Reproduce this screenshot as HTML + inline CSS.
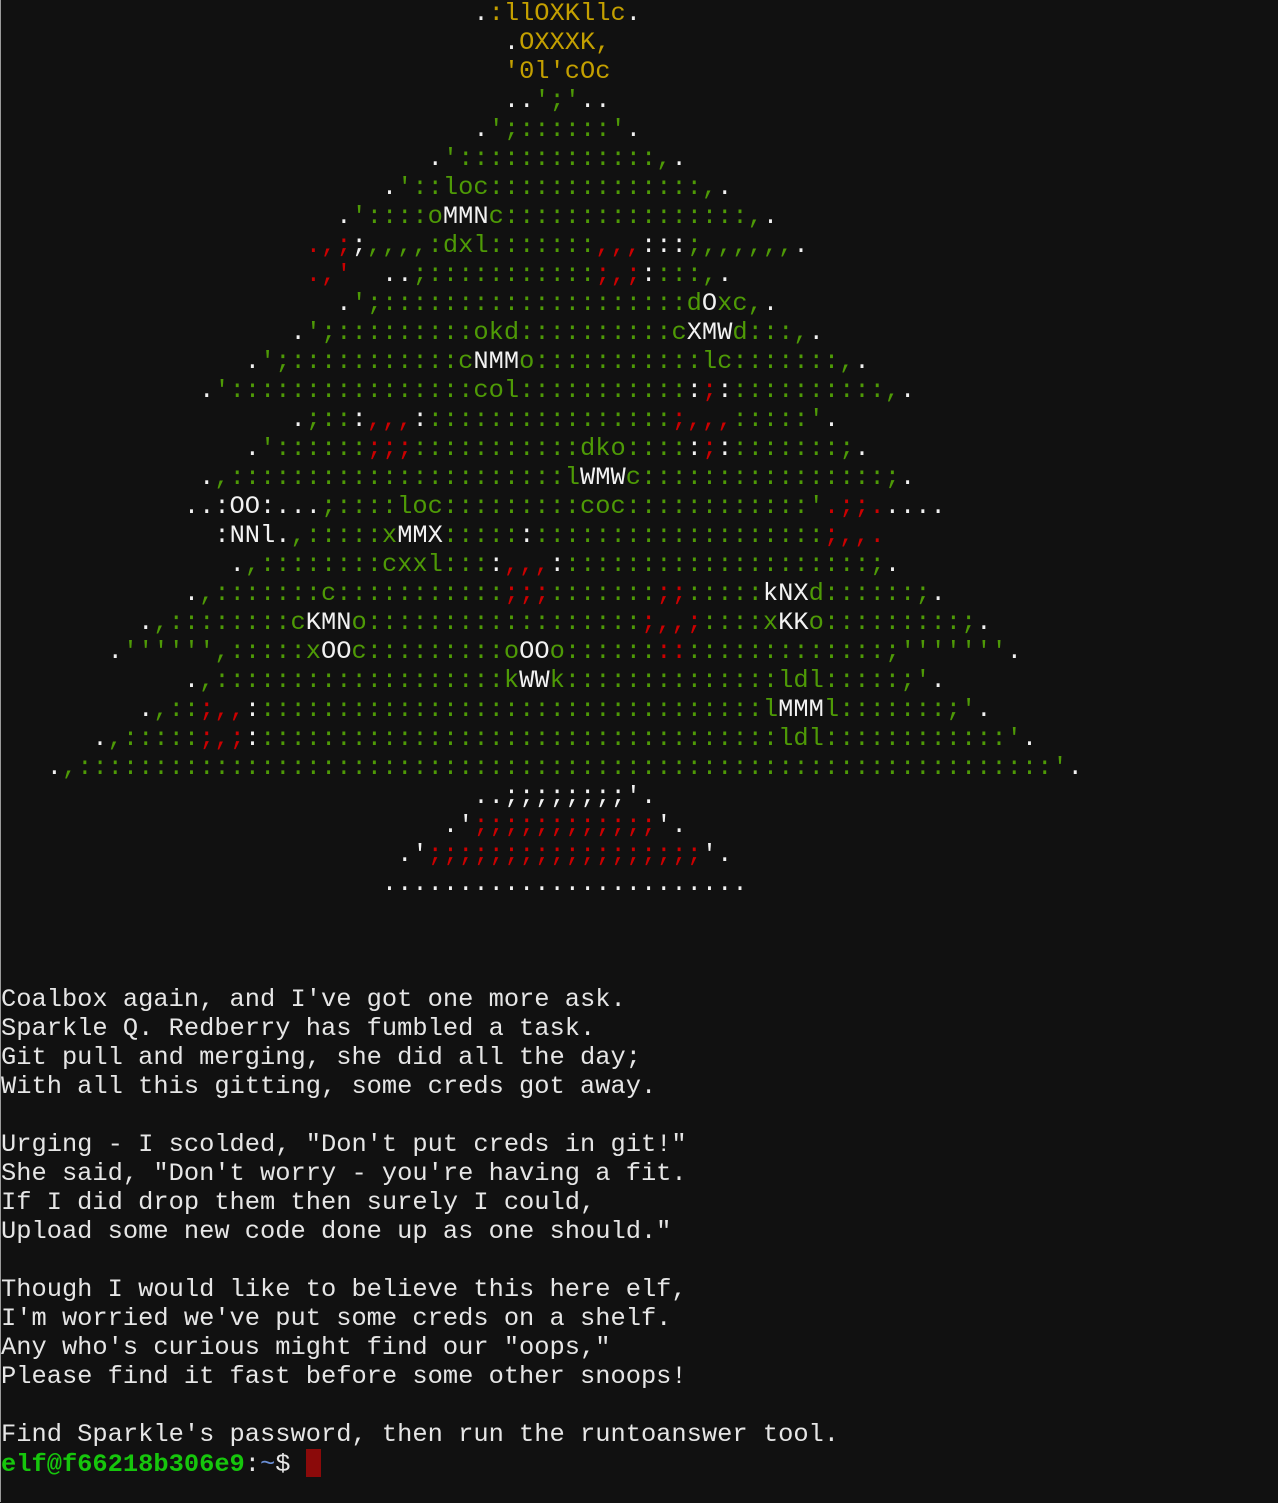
<!DOCTYPE html>
<html><head><meta charset="utf-8"><style>
html,body{margin:0;padding:0;background:#111111;}
body{width:1277px;height:1503px;overflow:hidden;border-left:1px solid #9a9a9a;}
pre{margin:-1px 0 0 0;padding:0;font-family:"Liberation Mono","DejaVu Sans Mono",monospace;font-size:25.4px;line-height:29px;color:#e6e6e6;white-space:pre;}
.w{color:#f2f2f2}.g{color:#4e9a06}.y{color:#c4a000}.r{color:#cc0000}
.p{color:#16c60c;font-weight:bold}.b{color:#6b8fd6}
.cur{display:inline-block;width:15px;height:28px;background:#8b0a0a;vertical-align:-6px;}
</style></head><body><pre>                               <span class="w">.</span><span class="y">:llOXKllc</span><span class="w">.</span>
                                 <span class="w">.</span><span class="y">OXXXK,</span>
                                 <span class="y">'0l'cOc</span>
                                 <span class="w">..</span><span class="g">';'</span><span class="w">..</span>
                               <span class="w">.</span><span class="g">';::::::'</span><span class="w">.</span>
                            <span class="w">.</span><span class="g">':::::::::::::,</span><span class="w">.</span>
                         <span class="w">.</span><span class="g">'::loc::::::::::::::,</span><span class="w">.</span>
                      <span class="w">.</span><span class="g">'::::o</span><span class="w">MMN</span><span class="g">c::::::::::::::::,</span><span class="w">.</span>
                    <span class="r">.,;</span><span class="w">;</span><span class="g">,,,,:dxl:::::::</span><span class="r">,,,</span><span class="w">:::</span><span class="g">;,,,,,,</span><span class="w">.</span>
                    <span class="r">.,'</span>  <span class="w">..</span><span class="g">;:::::::::::</span><span class="r">;,;</span><span class="w">:</span><span class="g">:::,</span><span class="w">.</span>
                      <span class="w">.</span><span class="g">';::::::::::::::::::::d</span><span class="w">O</span><span class="g">xc,</span><span class="w">.</span>
                   <span class="w">.</span><span class="g">';:::::::::okd::::::::::c</span><span class="w">XMW</span><span class="g">d:::,</span><span class="w">.</span>
                <span class="w">.</span><span class="g">';:::::::::::c</span><span class="w">NMM</span><span class="g">o:::::::::::lc:::::::,</span><span class="w">.</span>
             <span class="w">.</span><span class="g">'::::::::::::::::col:::::::::::</span><span class="w">:</span><span class="r">;</span><span class="w">:</span><span class="g">::::::::::,</span><span class="w">.</span>
                   <span class="w">.</span><span class="g">;::</span><span class="w">:</span><span class="r">,,,</span><span class="w">:</span><span class="g">::::::::::::::::</span><span class="r">;,,,</span><span class="g">:::::'</span><span class="w">.</span>
                <span class="w">.</span><span class="g">'::::::</span><span class="r">;;;</span><span class="g">:::::::::::dko::::</span><span class="w">:</span><span class="r">;</span><span class="w">:</span><span class="g">:::::::;</span><span class="w">.</span>
             <span class="w">.</span><span class="g">,::::::::::::::::::::::l</span><span class="w">WMW</span><span class="g">c::::::::::::::::;</span><span class="w">.</span>
            <span class="w">..:OO:...</span><span class="g">;::::loc:::::::::coc::::::::::::'</span><span class="r">.;;.</span><span class="w">....</span>
              <span class="w">:NNl.</span><span class="g">,:::::x</span><span class="w">MMX</span><span class="g">:::::</span><span class="w">:</span><span class="g">:::::::::::::::::::</span><span class="r">;,,.</span>
               <span class="w">.</span><span class="g">,::::::::cxxl:::</span><span class="w">:</span><span class="r">,,,</span><span class="w">:</span><span class="g">::::::::::::::::::::;</span><span class="w">.</span>
            <span class="w">.</span><span class="g">,:::::::c:::::::::::</span><span class="r">;;;</span><span class="g">:::::::</span><span class="r">;;</span><span class="g">:::::</span><span class="w">kNX</span><span class="g">d::::::;</span><span class="w">.</span>
         <span class="w">.</span><span class="g">,::::::::c</span><span class="w">KMN</span><span class="g">o::::::::::::::::::</span><span class="r">;,,;</span><span class="g">::::x</span><span class="w">KK</span><span class="g">o:::::::::;</span><span class="w">.</span>
       <span class="w">.</span><span class="g">'''''',:::::x</span><span class="w">OO</span><span class="g">c:::::::::o</span><span class="w">OO</span><span class="g">o::::::</span><span class="r">::</span><span class="g">:::::::::::::;'''''''</span><span class="w">.</span>
            <span class="w">.</span><span class="g">,:::::::::::::::::::k</span><span class="w">WW</span><span class="g">k::::::::::::::ldl:::::;'</span><span class="w">.</span>
         <span class="w">.</span><span class="g">,::</span><span class="r">;,,</span><span class="w">:</span><span class="g">:::::::::::::::::::::::::::::::::l</span><span class="w">MMM</span><span class="g">l:::::::;'</span><span class="w">.</span>
      <span class="w">.</span><span class="g">,:::::</span><span class="r">;,;</span><span class="w">:</span><span class="g">::::::::::::::::::::::::::::::::::ldl::::::::::::'</span><span class="w">.</span>
   <span class="w">.</span><span class="g">,::::::::::::::::::::::::::::::::::::::::::::::::::::::::::::::::'</span><span class="w">.</span>
                               <span class="w">..;;;;;;;;'.</span>
                             <span class="w">.'</span><span class="r">;;;;;;;;;;;;</span><span class="w">'.</span>
                          <span class="w">.'</span><span class="r">;;;;;;;;;;;;;;;;;;</span><span class="w">'.</span>
                         <span class="w">........................</span>



Coalbox again, and I've got one more ask.
Sparkle Q. Redberry has fumbled a task.
Git pull and merging, she did all the day;
With all this gitting, some creds got away.

Urging - I scolded, "Don't put creds in git!"
She said, "Don't worry - you're having a fit.
If I did drop them then surely I could,
Upload some new code done up as one should."

Though I would like to believe this here elf,
I'm worried we've put some creds on a shelf.
Any who's curious might find our "oops,"
Please find it fast before some other snoops!

Find Sparkle's password, then run the runtoanswer tool.
<span class="p">elf@f66218b306e9</span>:<span class="b">~</span>$ <span class="cur"></span></pre></body></html>
